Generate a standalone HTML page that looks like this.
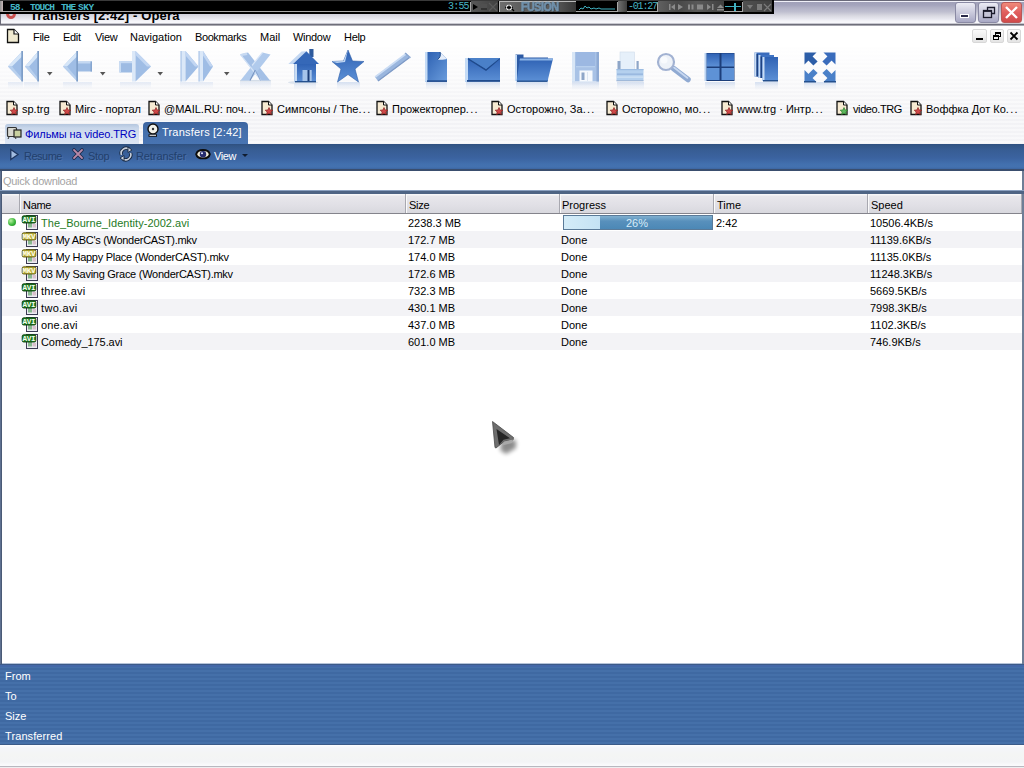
<!DOCTYPE html>
<html><head><meta charset="utf-8">
<style>
*{box-sizing:border-box}
html,body{margin:0;padding:0}
body{width:1024px;height:768px;overflow:hidden;position:relative;background:#fff;font-family:"Liberation Sans",sans-serif;font-size:11px;color:#000}
.a{position:absolute}
.t{position:absolute;white-space:nowrap;line-height:13px}
#title{left:0;top:0;width:1024px;height:26px;background:linear-gradient(#6a6a7a 0,#6a6a7a 1px,#f0f0f8 1px,#f0f0f8 2px,#a0a0b8 2px,#a4a4bc 5px,#b2b2c6 8px,#c0c0d0 12px,#dadae2 16px,#e8e8f0 19px,#f4f4f8 21px,#f8f8fc 23px,#c8c8d0 23px,#c8c8d0 24px,#6e6e7a 24px,#6e6e7a 25px,#a8a8b0 25px,#a8a8b0 26px)}
#winamp{left:0;top:0;width:774px;height:14px;background:#000}
#menubar{left:0;top:26px;width:1024px;height:21px;background:#fff}
#toolbar{left:0;top:47px;width:1024px;height:97px;background:repeating-linear-gradient(rgba(255,255,255,0) 0,rgba(255,255,255,0) 2px,rgba(255,255,255,0.45) 2px,rgba(255,255,255,0.45) 4px),linear-gradient(#fefefe 0,#fcfcfd 12px,#f6f6f8 45px,#f2f2f5 75px,#f4f4f7 97px)}
#tabbar{display:none}
#btoolbar{left:0;top:144px;width:1024px;height:27px;background:linear-gradient(#2e5080 0,#335788 2px,#375d94 6px,#3b63a0 14px,#4270ae 20px,#4472b0 23px,#3c66a2 25px,#3a4e6e 25px,#3a4e6e 27px)}
#qd{left:2px;top:171px;width:1020px;height:20px;background:#fff}
#band{left:0;top:190px;width:1024px;height:4px;background:linear-gradient(#8aa0c0 0,#8aa0c0 1px,#4e6484 1px,#4e6484 4px)}
#header{left:2px;top:194px;width:1020px;height:20px;background:linear-gradient(#f6f6f8 0,#f6f6f8 1px,#e8e7ec 2px,#e0dfe5 12px,#d8d8de 19px,#84848c 19px,#84848c 20px)}
#list{left:2px;top:214px;width:1020px;height:450px;background:#fff}
#details{left:0;top:664px;width:1024px;height:81px;background:linear-gradient(#3c5a88 0,#3c5a88 1px,#4468a8 1px,#4468a8 3px,rgba(40,60,100,0) 3px,rgba(40,60,100,0) 80px,#3a5a88 80px),repeating-linear-gradient(#3f69a2 0,#3f69a2 2px,#4570a9 2px,#4570a9 4px)}
#status{left:0;top:745px;width:1024px;height:23px;background:linear-gradient(#fbfcff 0,#f4f5f9 3px,#f4f5f4 10px,#f3f4f6 17px,#fafafc 20px,#fafafc 21px,#b8b8c0 21px,#b8b8c0 22px,#eeeef0 22px)}
.row{position:absolute;left:2px;width:1020px;height:17px}
.row.alt{background:#f2f2f4}
</style></head><body>
<div id="title" class="a"></div>

<div id="menubar" class="a"></div>
<!-- title -->
<div class="t" style="left:30px;top:8px;font-weight:bold;font-size:13px;line-height:15px;color:#000;letter-spacing:0.15px">Transfers [2:42] - Opera</div>
<div class="a" style="left:6px;top:8px;width:10px;height:11px;border-radius:50%;border:3px solid #c85050;border-top-width:2px;background:transparent"></div><div class="a" style="left:0;top:13px;width:1px;height:12px;background:#6a6a78"></div>
<div id="winamp" class="a">
 <div class="a" style="left:0;top:0;width:774px;height:1px;background:#3a3a3a"></div>
 <div class="a" style="left:0;top:1px;width:3px;height:12px;background:linear-gradient(90deg,#909090,#c8b8b8)"></div>
 <div class="a" style="left:3px;top:2px;width:468px;height:10px;background:#000;border-right:1px solid #a8a8a8;border-bottom:1px solid #a8a8a8"></div>
 <div class="t" style="left:10px;top:2px;font-family:'Liberation Mono';font-size:9.5px;line-height:12px;color:#44b8c8;font-weight:bold;letter-spacing:-1px">58.</div>
 <div class="t" style="left:30px;top:2px;font-family:'Liberation Mono';font-size:9.5px;line-height:12px;color:#44b8c8;font-weight:bold;letter-spacing:-0.9px">TOUCH</div>
 <div class="t" style="left:61px;top:2px;font-family:'Liberation Mono';font-size:9.5px;line-height:12px;color:#44b8c8;font-weight:bold;letter-spacing:-1px">THE</div>
 <div class="t" style="left:78px;top:2px;font-family:'Liberation Mono';font-size:9.5px;line-height:12px;color:#44b8c8;font-weight:bold;letter-spacing:-0.5px">SKY</div>
 <div class="t" style="left:448px;top:0px;font-family:'Liberation Mono';font-size:10px;line-height:13px;color:#48b4c4;letter-spacing:-0.8px">3:55</div>
 <div class="a" style="left:471px;top:1px;width:27px;height:11px;background:linear-gradient(90deg,#585858,#404040)"></div>
 <div class="a" style="left:473px;top:4px;width:0;height:0;border-left:5px solid #000;border-top:3px solid transparent;border-bottom:3px solid transparent"></div>
 <div class="a" style="left:481px;top:4px;width:6px;height:6px;background:#505050;border-bottom:2px solid #333"></div>
 <svg class="a" style="left:488px;top:2px" width="10" height="10"><path d="M1 1 L9 9 M9 1 L1 9" stroke="#5a5a5a" stroke-width="1.3"/></svg>
 <div class="a" style="left:499px;top:1px;width:77px;height:12px;background:linear-gradient(90deg,#6e6e6e,#5c5c5c 30%,#626262 55%,#505050 80%,#363636);border-top:1px solid #b8b8b8;border-left:1px solid #b8b8b8"></div>
 <svg class="a" style="left:504px;top:3px" width="12" height="9"><path d="M1 4.5 H9 M5 1 V8" stroke="#000" stroke-width="1.3"/><circle cx="5" cy="4.5" r="2.6" fill="none" stroke="#fff" stroke-width="1"/><path d="M8 6 L10 8" stroke="#000" stroke-width="1.2"/></svg>
 <div class="t" style="left:521px;top:0px;font-size:12px;line-height:14px;color:#7090aa;font-weight:bold;letter-spacing:-0.6px;transform:scaleX(0.9);transform-origin:0 0;-webkit-text-stroke:0.6px #7090aa;text-shadow:1px 1px 0 #3a4048">FUSION</div>
 <div class="a" style="left:576px;top:2px;width:42px;height:10px;background:#000;border-right:1px solid #a8a8a8;border-bottom:1px solid #a8a8a8"></div>
 <svg class="a" style="left:577px;top:3px" width="40" height="9"><path d="M2 7 L4 5 L6 6 L8 3 L10 5 L12 4 L14 6 L17 5 L19 6 L22 5 L24 6 L27 6 L30 6 L38 6" fill="none" stroke="#40b0c0" stroke-width="1"/></svg>
 <div class="a" style="left:618px;top:1px;width:9px;height:12px;background:linear-gradient(90deg,#707070,#404040)"></div>
 <div class="a" style="left:627px;top:2px;width:31px;height:10px;background:#000;border-right:1px solid #a8a8a8;border-bottom:1px solid #a8a8a8"></div>
 <div class="t" style="left:628px;top:0px;font-family:'Liberation Mono';font-size:10px;line-height:13px;color:#48b4c4;letter-spacing:-1.2px">-01:27</div>
 <div class="a" style="left:658px;top:1px;width:66px;height:12px;background:linear-gradient(90deg,#606060,#484848 30%,#585858 60%,#404040)"></div>
 
 <div class="a" style="left:724px;top:2px;width:19px;height:10px;background:#000;border-right:1px solid #a8a8a8;border-bottom:1px solid #a8a8a8"></div>
 <div class="a" style="left:725px;top:6px;width:16px;height:1px;background:#40b0c0"></div>
 <div class="a" style="left:734px;top:3px;width:2px;height:8px;background:#40b0c0"></div>
 <div class="a" style="left:743px;top:1px;width:31px;height:12px;background:linear-gradient(90deg,#505050,#404040)"></div>
 <svg class="a" style="left:658px;top:1px" width="116" height="12">
<g fill="#8a8a8a">
<rect x="11" y="3" width="1.5" height="6"/><path d="M17 3 L13 6 L17 9 Z"/>
<path d="M20 3 L25 6 L20 9 Z"/>
<rect x="30" y="3.5" width="2" height="5"/><rect x="33.5" y="3.5" width="2" height="5"/>
<rect x="39" y="3.5" width="6" height="5"/>
<path d="M49 3 L53 6 L49 9 Z"/><rect x="54" y="3" width="1.5" height="6"/>
<path d="M59 7 L62.5 3.5 L66 7 Z"/><rect x="59" y="8" width="7" height="1.5"/>
</g>
<g fill="#7a7a7a"><path d="M89 4 H95 L92 8 Z"/><rect x="99" y="3" width="5" height="6"/><path d="M106 3 L113 10 M113 3 L106 10" stroke="#7a7a7a" stroke-width="1.2"/></g>
</svg>
 <div class="a" style="left:0;top:12px;width:774px;height:2px;background:#000"></div>
 <div class="a" style="left:772px;top:0;width:2px;height:14px;background:#000"></div>
</div>
<!-- title buttons -->
<div class="a" style="left:955px;top:2px;width:21px;height:21px;border:1px solid #8a8aa4;border-radius:3px;background:linear-gradient(#ececf4,#c4c4d8 60%,#a8a8c4)"></div>
<div class="a" style="left:960px;top:14px;width:9px;height:4px;background:#2a2a4a;border:1px solid #fff"></div>
<div class="a" style="left:978px;top:2px;width:21px;height:21px;border:1px solid #8a8aa4;border-radius:3px;background:linear-gradient(#ececf4,#c4c4d8 60%,#a8a8c4)"></div>
<svg class="a" style="left:982px;top:6px" width="14" height="13"><path d="M5.5 4 V1.5 H12.5 V7.5 H10" fill="none" stroke="#1a1a2a" stroke-width="1.3"/><rect x="1.5" y="4.5" width="8" height="7" fill="#c4c4d6" stroke="#1a1a2a" stroke-width="1.3"/><path d="M1.5 5.3 H9.5" stroke="#1a1a2a" stroke-width="1.2"/></svg>

<div class="a" style="left:1001px;top:2px;width:21px;height:21px;border:1px solid #b85858;border-radius:3px;background:linear-gradient(#f08a7a,#e05e5e 50%,#d04a4a)"></div>
<svg class="a" style="left:1001px;top:2px" width="21" height="21"><path d="M5 5 L16 16 M16 5 L5 16" stroke="#fff" stroke-width="2.4"/></svg>
<!-- menu -->
<svg class="a" style="left:6px;top:28px" width="14" height="16"><path d="M1.5 1.5 H8 L12.5 6 V14.5 H1.5 Z" fill="#f0ead0" stroke="#111" stroke-width="1.3"/><path d="M8 1.5 V6 H12.5" fill="#fff" stroke="#111" stroke-width="1.2"/></svg>
<div class="t" style="left:33px;top:31px;letter-spacing:-0.3px">File</div>
<div class="t" style="left:63px;top:31px;letter-spacing:-0.3px">Edit</div>
<div class="t" style="left:95px;top:31px;letter-spacing:-0.3px">View</div>
<div class="t" style="left:130px;top:31px">Navigation</div>
<div class="t" style="left:195px;top:31px;letter-spacing:-0.4px">Bookmarks</div>
<div class="t" style="left:260px;top:31px">Mail</div>
<div class="t" style="left:293px;top:31px;letter-spacing:-0.3px">Window</div>
<div class="t" style="left:344px;top:31px;letter-spacing:-0.3px">Help</div>
<div class="a" style="left:972px;top:29px;width:15px;height:14px;border:1px solid #d8d8d8;border-radius:2px;background:linear-gradient(#fafafa,#e4e4e4)"></div>
<div class="a" style="left:976px;top:38px;width:7px;height:2px;background:#000"></div>
<div class="a" style="left:990px;top:29px;width:14px;height:14px;border:1px solid #d8d8d8;border-radius:2px;background:linear-gradient(#fafafa,#e4e4e4)"></div>
<div class="a" style="left:995px;top:32px;width:6px;height:5px;border:1.5px solid #000;border-top-width:2px"></div>
<div class="a" style="left:993px;top:35px;width:6px;height:5px;border:1.5px solid #000;border-top-width:2px;background:#f0f0f0"></div>
<div class="a" style="left:1007px;top:29px;width:14px;height:14px;border:1px solid #d8d8d8;border-radius:2px;background:linear-gradient(#fafafa,#e4e4e4)"></div>
<svg class="a" style="left:1007px;top:29px" width="14" height="14"><path d="M3.5 3.5 L10.5 10.5 M10.5 3.5 L3.5 10.5" stroke="#000" stroke-width="1.8"/></svg>

<div id="toolbar" class="a"></div>
<div id="tabbar" class="a"></div>
<svg class="a" style="left:0;top:0" width="1024" height="100">
<defs>
<linearGradient id="lb" x1="0" y1="0" x2="0" y2="1"><stop offset="0" stop-color="#b8d0ee"/><stop offset="1" stop-color="#8eb0dc"/></linearGradient>
<linearGradient id="lbh" x1="0" y1="0" x2="1" y2="0"><stop offset="0" stop-color="#e2ecf9"/><stop offset="1" stop-color="#9dbbe2"/></linearGradient>
<linearGradient id="db" x1="0" y1="0" x2="0" y2="1"><stop offset="0" stop-color="#2f62b4"/><stop offset="1" stop-color="#5c90d6"/></linearGradient>
<linearGradient id="db2" x1="0" y1="0" x2="1" y2="1"><stop offset="0" stop-color="#2a5eb0"/><stop offset="1" stop-color="#6a9cdc"/></linearGradient>
<linearGradient id="gray" x1="0" y1="0" x2="0" y2="1"><stop offset="0" stop-color="#a9c2e4"/><stop offset="1" stop-color="#92b0da"/></linearGradient>
<linearGradient id="refl" x1="0" y1="0" x2="0" y2="1"><stop offset="0" stop-color="#a8c0e4" stop-opacity="0.45"/><stop offset="1" stop-color="#c8d8f0" stop-opacity="0"/></linearGradient></defs>
<rect x="294" y="82" width="22" height="8" fill="url(#refl)"/><rect x="337" y="82" width="23" height="8" fill="url(#refl)"/><rect x="426" y="82" width="21" height="8" fill="url(#refl)"/><rect x="466" y="82" width="34" height="8" fill="url(#refl)"/><rect x="516" y="82" width="32" height="8" fill="url(#refl)"/><rect x="572" y="82" width="27" height="8" fill="url(#refl)"/><rect x="617" y="82" width="27" height="8" fill="url(#refl)"/><rect x="705" y="82" width="30" height="8" fill="url(#refl)"/><rect x="755" y="82" width="23" height="8" fill="url(#refl)"/><rect x="804" y="82" width="32" height="8" fill="url(#refl)"/><rect x="8" y="82" width="15" height="7" fill="url(#refl)" opacity="0.6"/><rect x="24" y="82" width="15" height="7" fill="url(#refl)" opacity="0.6"/><rect x="63" y="82" width="29" height="7" fill="url(#refl)" opacity="0.6"/><rect x="120" y="82" width="31" height="7" fill="url(#refl)" opacity="0.6"/><rect x="180" y="82" width="33" height="7" fill="url(#refl)" opacity="0.6"/><rect x="240" y="82" width="31" height="7" fill="url(#refl)" opacity="0.6"/>
<!-- rewind -->
<path d="M8 66.5 L22.5 51 L22.5 81.5 Z" fill="#9fbde5"/><path d="M8 66.5 L22.5 51 L22.5 56 L12 66.5 Z" fill="#d6e6f8"/><path d="M8 66.5 L12 66.5 L22.5 79 L22.5 81.5 Z" fill="#b8d0ee"/><rect x="21.3" y="51" width="1.7" height="30.5" fill="#7e9ec8"/>
<path d="M25 66.5 L38.5 51 L38.5 81.5 Z" fill="#9fbde5"/><path d="M25 66.5 L38.5 51 L38.5 56 L29 66.5 Z" fill="#d6e6f8"/><path d="M25 66.5 L29 66.5 L38.5 79 L38.5 81.5 Z" fill="#b8d0ee"/><rect x="37.3" y="51" width="1.7" height="30.5" fill="#7e9ec8"/>
<path d="M47 72 H52.5 L49.7 75.5 Z" fill="#555"/>
<!-- back -->
<path d="M63 66.5 L77.5 51 L77.5 81.5 Z" fill="#9fbde5"/><path d="M63 66.5 L77.5 51 L77.5 56 L67 66.5 Z" fill="#d6e6f8"/><path d="M63 66.5 L67 66.5 L77.5 79 L77.5 81.5 Z" fill="#b8d0ee"/>
<rect x="77" y="61.5" width="15" height="10" fill="#9dbbe3"/><rect x="77" y="61.5" width="15" height="2" fill="#c4d8f2"/><rect x="90.5" y="61.5" width="1.5" height="10" fill="#86a6d0"/>
<rect x="76.3" y="51" width="1.7" height="30.5" fill="#7e9ec8"/>
<path d="M100 72 H105.5 L102.7 75.5 Z" fill="#555"/>
<!-- forward -->
<rect x="119.5" y="61" width="14" height="11.5" fill="#9dbbe3"/><rect x="119.5" y="61" width="14" height="2.2" fill="#c4d8f2"/><rect x="119.5" y="61" width="1.5" height="11.5" fill="#c8dcf4"/>
<rect x="132" y="51" width="3.5" height="30.5" fill="#dbe8f8"/>
<path d="M135.5 51 L151 66.5 L135.5 81.5 Z" fill="#9fbde5"/><path d="M135.5 51 L151 66.5 L147 66.5 L135.5 55 Z" fill="#c2d6f2"/>
<path d="M157.5 72 H163 L160.2 75.5 Z" fill="#555"/>
<!-- ff -->
<rect x="180.5" y="51" width="5" height="30.5" fill="#dbe8f8"/><rect x="180.5" y="51" width="1.2" height="30.5" fill="#b0c8e8"/>
<path d="M185.5 51 L198.5 66.5 L185.5 81.5 Z" fill="#9fbde5"/><path d="M185.5 51 L198.5 66.5 L195 66.5 L185.5 55.5 Z" fill="#c2d6f2"/>
<rect x="198.5" y="51" width="4.5" height="30.5" fill="#dbe8f8"/><rect x="198.5" y="51" width="1.2" height="30.5" fill="#b0c8e8"/>
<path d="M203 51 L213 66.5 L203 81.5 Z" fill="#9fbde5"/><path d="M203 51 L213 66.5 L210 66.5 L203 55.5 Z" fill="#c2d6f2"/>
<path d="M224 72 H229.5 L226.7 75.5 Z" fill="#555"/>
<!-- stop -->
<rect x="240" y="80" width="31" height="1.6" fill="#d4dde8"/>
<path d="M240 54.5 L248 52.5 L270 80.5 L260.5 80.5 Z" fill="#a4c0e6"/>
<path d="M262.5 52.5 L270.5 54.5 L250 80.5 L240.5 80.5 Z" fill="#b0caec"/>
<path d="M240.5 54.5 L261 80.5" stroke="#d6e4f7" stroke-width="1.2"/>
<path d="M262.5 52.5 L252 65.5" stroke="#d6e4f7" stroke-width="1.2"/>
<path d="M255.3 70 L250 80.5" stroke="#7894c0" stroke-width="1.1"/>
<path d="M255.3 70 L260.5 80.5" stroke="#8aa6d0" stroke-width="0.9"/>
<path d="M246.5 52.5 L247.5 55 L241.5 56 L240.5 54 Z" fill="#c8daf2"/>
<!-- home -->
<ellipse cx="303" cy="82.5" rx="15" ry="1.6" fill="#dde4ee"/>
<rect x="309.3" y="49" width="4.2" height="8" fill="#2e5a9c"/>
<rect x="294.5" y="64" width="21.5" height="18" fill="url(#db)"/><rect x="294.5" y="64" width="2.5" height="18" fill="#c8dcf4"/>
<path d="M288.3 64 L301.5 51.5 L306.4 51.3 L293 64 Z" fill="#c4d8f2"/>
<path d="M293 64 L306.4 51.3 L319 64 Z" fill="#3568b8"/>
<rect x="302.5" y="70" width="9.2" height="12" fill="#a6c4ea"/><rect x="307.5" y="70" width="2" height="12" fill="#1c3e78"/>
<rect x="295" y="81" width="21" height="1.4" fill="#24508e"/>
<!-- star -->
<path d="M348 50 L352.5 61 L364 61.5 L355 69 L358.5 82 L348 74.5 L337.5 82 L341 69 L332 61.5 L343.5 61 Z" fill="url(#db)" stroke="#2d5ea8" stroke-width="0.6"/>
<path d="M348 50 L343.5 61 L332 61.5 L337 63 L345 62 Z" fill="#bcd4f2"/>
<!-- pen -->
<path d="M376.5 79 L408 55.5" stroke="#9ab6de" stroke-width="5.6" stroke-linecap="butt"/>
<path d="M375.2 77 L406.5 53.5" stroke="#cadcf4" stroke-width="1.6" stroke-linecap="butt"/>
<path d="M378 81 L409.5 57.5" stroke="#7e9ac6" stroke-width="1.2" stroke-linecap="butt"/>
<path d="M405 53 L410.5 57.8" stroke="#8aa6d0" stroke-width="1.4"/>
<!-- page -->
<path d="M425 52 H440 L447 59 V81.5 H425 Z" fill="url(#db2)"/><rect x="425" y="52" width="2.5" height="29.5" fill="#c4dbf6"/>
<path d="M440 52 C441 55 440 58 437.5 59.5 C441 60 445 59.5 447 59 Z" fill="#e6eefa"/><path d="M437.5 59.5 C440 58 441 55 440 52" fill="none" stroke="#1e4a8a" stroke-width="1"/>
<rect x="427" y="80.3" width="20" height="1.6" fill="#1f4a8c"/>
<!-- envelope -->
<rect x="465" y="58" width="35" height="23.5" fill="url(#db)"/><rect x="465" y="58" width="3" height="23.5" fill="#c4dbf6"/>
<path d="M468 58.5 L486 70 L499.5 58.5" fill="none" stroke="#1f4a8c" stroke-width="1.6"/><path d="M468 58 L486 69 L500 58 Z" fill="#4a80c8"/>
<rect x="467" y="80" width="33" height="1.8" fill="#1f4a8c"/>
<!-- folder -->
<path d="M515.5 54.5 H523.5 V57.5 H548 V81 H515.5 Z" fill="#2c5aa4"/><rect x="515" y="55" width="2" height="26" fill="#c4dbf6"/>
<path d="M520 58.5 H553 L547.5 81.5 H516.5 Z" fill="url(#db)"/><path d="M520 58.5 H553 L552.5 60.5 H519.5 Z" fill="#8cb4e6"/>
<rect x="517" y="80.5" width="30.5" height="1.4" fill="#24508e"/>
<!-- floppy -->
<rect x="572" y="52" width="27" height="29.5" fill="#a8c2e6"/><rect x="572" y="52" width="3" height="29.5" fill="#d8e6f6"/><rect x="596.5" y="52" width="2.5" height="29.5" fill="#8eaad4"/>
<rect x="576" y="52" width="19" height="15" fill="#9cb8e2"/><rect x="576" y="66" width="19" height="1.3" fill="#b8d0ee"/>
<rect x="579.5" y="70.5" width="13" height="11" fill="#f6f9fd"/><rect x="581.5" y="72.5" width="3" height="7.5" fill="#8ea6c8"/><rect x="587" y="72" width="1" height="9" fill="#dde6f2"/>
<!-- printer -->
<rect x="620" y="52" width="14.5" height="18" fill="#e6f0fa" stroke="#d0dcec" stroke-width="0.6"/>
<rect x="617.5" y="61" width="3" height="8.5" fill="#8ea6c8"/><rect x="636.5" y="61" width="2.2" height="8.5" fill="#8ea6c8"/>
<rect x="616.5" y="69" width="27" height="12" fill="#b4d0ee"/><rect x="616.5" y="69" width="27" height="1.2" fill="#9cbce2"/>
<rect x="617" y="73.5" width="26" height="1.3" fill="#94b4dc"/><rect x="617" y="76.5" width="26" height="1.2" fill="#d2e4f6"/>
<rect x="616.5" y="80.3" width="27" height="1" fill="#98b0d0"/>
<!-- magnifier -->
<path d="M673.5 68.5 L688 79.5" stroke="#90aad2" stroke-width="5.5" stroke-linecap="round"/>
<path d="M674 67.5 L687.5 78" stroke="#c8d8f0" stroke-width="1.6" stroke-linecap="round"/>
<circle cx="666" cy="62" r="8" fill="#eef2f8" stroke="#a2b2d2" stroke-width="2.2"/>
<circle cx="664" cy="60" r="3.5" fill="#f8fafd"/>
<!-- tile -->
<rect x="705" y="53" width="29.5" height="28" fill="#1c3e7a"/>
<rect x="706.5" y="53.5" width="13" height="13" fill="url(#db)"/><rect x="721.5" y="53.5" width="12.5" height="13" fill="url(#db)"/>
<rect x="706.5" y="68" width="13" height="12" fill="#5e92d6"/><rect x="721.5" y="68" width="12.5" height="12" fill="#5e92d6"/>
<rect x="704.5" y="53" width="2" height="28" fill="#b8d2f2"/>
<!-- cascade -->
<rect x="754.5" y="52.5" width="15" height="24" fill="#3a6cbc"/><rect x="754.5" y="52.5" width="2" height="24" fill="#c8dcf4"/><rect x="756.5" y="54" width="1.5" height="22.5" fill="#1e4282"/>
<rect x="758.5" y="55" width="15.5" height="23" fill="#4074c4"/><rect x="758.5" y="55" width="2" height="23" fill="#c8dcf4"/><rect x="760.5" y="56.5" width="1.5" height="21.5" fill="#1e4282"/>
<rect x="762.5" y="57" width="15.5" height="24" fill="url(#db)"/><rect x="762.5" y="57" width="2" height="24" fill="#c8dcf4"/><rect x="763" y="80" width="15" height="1.5" fill="#24508e"/>
<!-- fullscreen -->
<g stroke-linecap="butt">
<path d="M804.5 52.5 H816.5 L804.5 64.5 Z" fill="#2d5ea8"/><path d="M809 57 L815.5 63.5" stroke="#2d5ea8" stroke-width="6"/>
<path d="M835.5 52.5 H823.5 L835.5 64.5 Z" fill="#3a6cbc"/><path d="M831 57 L824.5 63.5" stroke="#3a6cbc" stroke-width="6"/>
<path d="M804.5 82 H816.5 L804.5 70 Z" fill="#4a80c8"/><path d="M809 77.5 L815.5 71" stroke="#4a80c8" stroke-width="6"/>
<path d="M835.5 82 H823.5 L835.5 70 Z" fill="#4a80c8"/><path d="M831 77.5 L824.5 71" stroke="#4a80c8" stroke-width="6"/>
<rect x="804" y="81" width="12" height="1.5" fill="#24508e"/><rect x="824" y="81" width="12" height="1.5" fill="#24508e"/>
</g>
</svg>

<div id="btoolbar" class="a"></div><svg class="a" style="left:6px;top:100px" width="14" height="16"><path d="M1 1.5 H7.5 L11 5 V14.5 H1 Z" fill="#f6ead2" stroke="#111" stroke-width="1.3"/><path d="M7.5 1.5 V5 H11" fill="#fff" stroke="#111" stroke-width="1"/><path d="M8 7.5 L9.1 10 L11.8 10.2 L9.8 12 L10.4 14.6 L8 13.2 L5.6 14.6 L6.2 12 L4.2 10.2 L6.9 10 Z" fill="#d04848" stroke="#8a2020" stroke-width="0.7"/></svg>
<div class="t" style="left:22px;top:103px">sp.trg</div>
<svg class="a" style="left:59px;top:100px" width="14" height="16"><path d="M1 1.5 H7.5 L11 5 V14.5 H1 Z" fill="#f6ead2" stroke="#111" stroke-width="1.3"/><path d="M7.5 1.5 V5 H11" fill="#fff" stroke="#111" stroke-width="1"/><path d="M8 7.5 L9.1 10 L11.8 10.2 L9.8 12 L10.4 14.6 L8 13.2 L5.6 14.6 L6.2 12 L4.2 10.2 L6.9 10 Z" fill="#d04848" stroke="#8a2020" stroke-width="0.7"/></svg>
<div class="t" style="left:75px;top:103px">Mirc - портал</div>
<svg class="a" style="left:148px;top:100px" width="14" height="16"><path d="M1 1.5 H7.5 L11 5 V14.5 H1 Z" fill="#f6ead2" stroke="#111" stroke-width="1.3"/><path d="M7.5 1.5 V5 H11" fill="#fff" stroke="#111" stroke-width="1"/><path d="M8 7.5 L9.1 10 L11.8 10.2 L9.8 12 L10.4 14.6 L8 13.2 L5.6 14.6 L6.2 12 L4.2 10.2 L6.9 10 Z" fill="#d04848" stroke="#8a2020" stroke-width="0.7"/></svg>
<div class="t" style="left:164px;top:103px">@MAIL.RU: поч<span style="letter-spacing:1.3px">...</span></div>
<svg class="a" style="left:261px;top:100px" width="14" height="16"><path d="M1 1.5 H7.5 L11 5 V14.5 H1 Z" fill="#f6ead2" stroke="#111" stroke-width="1.3"/><path d="M7.5 1.5 V5 H11" fill="#fff" stroke="#111" stroke-width="1"/><path d="M8 7.5 L9.1 10 L11.8 10.2 L9.8 12 L10.4 14.6 L8 13.2 L5.6 14.6 L6.2 12 L4.2 10.2 L6.9 10 Z" fill="#d04848" stroke="#8a2020" stroke-width="0.7"/></svg>
<div class="t" style="left:277px;top:103px">Симпсоны / The<span style="letter-spacing:1.3px">...</span></div>
<svg class="a" style="left:376px;top:100px" width="14" height="16"><path d="M1 1.5 H7.5 L11 5 V14.5 H1 Z" fill="#f6ead2" stroke="#111" stroke-width="1.3"/><path d="M7.5 1.5 V5 H11" fill="#fff" stroke="#111" stroke-width="1"/><path d="M8 7.5 L9.1 10 L11.8 10.2 L9.8 12 L10.4 14.6 L8 13.2 L5.6 14.6 L6.2 12 L4.2 10.2 L6.9 10 Z" fill="#d04848" stroke="#8a2020" stroke-width="0.7"/></svg>
<div class="t" style="left:392px;top:103px">Прожекторпер<span style="letter-spacing:1.3px">...</span></div>
<svg class="a" style="left:491px;top:100px" width="14" height="16"><path d="M1 1.5 H7.5 L11 5 V14.5 H1 Z" fill="#f6ead2" stroke="#111" stroke-width="1.3"/><path d="M7.5 1.5 V5 H11" fill="#fff" stroke="#111" stroke-width="1"/><path d="M8 7.5 L9.1 10 L11.8 10.2 L9.8 12 L10.4 14.6 L8 13.2 L5.6 14.6 L6.2 12 L4.2 10.2 L6.9 10 Z" fill="#d04848" stroke="#8a2020" stroke-width="0.7"/></svg>
<div class="t" style="left:507px;top:103px">Осторожно, За<span style="letter-spacing:1.3px">...</span></div>
<svg class="a" style="left:606px;top:100px" width="14" height="16"><path d="M1 1.5 H7.5 L11 5 V14.5 H1 Z" fill="#f6ead2" stroke="#111" stroke-width="1.3"/><path d="M7.5 1.5 V5 H11" fill="#fff" stroke="#111" stroke-width="1"/><path d="M8 7.5 L9.1 10 L11.8 10.2 L9.8 12 L10.4 14.6 L8 13.2 L5.6 14.6 L6.2 12 L4.2 10.2 L6.9 10 Z" fill="#d04848" stroke="#8a2020" stroke-width="0.7"/></svg>
<div class="t" style="left:622px;top:103px">Осторожно, мо<span style="letter-spacing:1.3px">...</span></div>
<svg class="a" style="left:721px;top:100px" width="14" height="16"><path d="M1 1.5 H7.5 L11 5 V14.5 H1 Z" fill="#f6ead2" stroke="#111" stroke-width="1.3"/><path d="M7.5 1.5 V5 H11" fill="#fff" stroke="#111" stroke-width="1"/><path d="M8 7.5 L9.1 10 L11.8 10.2 L9.8 12 L10.4 14.6 L8 13.2 L5.6 14.6 L6.2 12 L4.2 10.2 L6.9 10 Z" fill="#d04848" stroke="#8a2020" stroke-width="0.7"/></svg>
<div class="t" style="left:737px;top:103px">www.trg · Интр<span style="letter-spacing:1.3px">...</span></div>
<svg class="a" style="left:836px;top:100px" width="14" height="16"><path d="M1 1.5 H7.5 L11 5 V14.5 H1 Z" fill="#f6ead2" stroke="#111" stroke-width="1.3"/><path d="M7.5 1.5 V5 H11" fill="#fff" stroke="#111" stroke-width="1"/><path d="M8 7.5 L9.1 10 L11.8 10.2 L9.8 12 L10.4 14.6 L8 13.2 L5.6 14.6 L6.2 12 L4.2 10.2 L6.9 10 Z" fill="#5cb85c" stroke="#2a7a2a" stroke-width="0.7"/></svg>
<div class="t" style="left:853px;top:103px;letter-spacing:-0.4px">video.TRG</div>
<svg class="a" style="left:910px;top:100px" width="14" height="16"><path d="M1 1.5 H7.5 L11 5 V14.5 H1 Z" fill="#f6ead2" stroke="#111" stroke-width="1.3"/><path d="M7.5 1.5 V5 H11" fill="#fff" stroke="#111" stroke-width="1"/><path d="M8 7.5 L9.1 10 L11.8 10.2 L9.8 12 L10.4 14.6 L8 13.2 L5.6 14.6 L6.2 12 L4.2 10.2 L6.9 10 Z" fill="#d04848" stroke="#8a2020" stroke-width="0.7"/></svg>
<div class="t" style="left:926px;top:103px">Воффка Дот Ко<span style="letter-spacing:1.3px">...</span></div>

<div class="a" style="left:5px;top:124px;width:134px;height:20px;border-radius:3px 3px 0 0;background:linear-gradient(#b4c6de,#c8d6ea 4px,#d4dff0 12px,#dce6f4)"></div>
<svg class="a" style="left:6px;top:125px" width="17" height="15"><rect x="1.5" y="2.5" width="9" height="9" rx="1" fill="#d8d8d0" stroke="#333" stroke-width="1.2"/><rect x="8" y="5" width="7" height="7" fill="#c8d0a0" stroke="#222" stroke-width="1.2"/><path d="M3 12 L2 14 M9 12 L10 14" stroke="#333"/></svg>
<div class="t" style="left:25px;top:128px;color:#0000c0;letter-spacing:-0.1px">Фильмы на video.TRG</div>
<div class="a" style="left:143px;top:122px;width:105px;height:22px;border-radius:4px 4px 0 0;background:linear-gradient(#3d65a0,#4570ac 10px,#4874b2)"></div>
<svg class="a" style="left:146px;top:123px" width="14" height="15"><circle cx="7" cy="6" r="5" fill="#f2f2ea" stroke="#111" stroke-width="1.4"/><circle cx="7" cy="6" r="1.2" fill="#333"/><path d="M2.5 12.5 H11" stroke="#111" stroke-width="2.5"/><path d="M3.5 12.3 H10" stroke="#f4f4f4" stroke-width="1"/></svg>
<div class="t" style="left:162px;top:126px;color:#fff;letter-spacing:0.2px">Transfers [2:42]</div>

<div class="a" style="left:0;top:171px;width:2px;height:493px;background:linear-gradient(90deg,#5e7090 0,#5e7090 1px,#4a5a76 1px)"></div>
<div class="a" style="left:1022px;top:171px;width:2px;height:493px;background:#6e7e96"></div>
<div id="qd" class="a"></div>
<div id="band" class="a"></div>
<svg class="a" style="left:9px;top:148px" width="12" height="14"><path d="M1.8 1.5 L9 6.5 L1.8 11.5 Z" fill="#a2bce0" stroke="#1e3660" stroke-width="1.3"/></svg>
<div class="t" style="left:24px;top:150px;color:#22406c;letter-spacing:-0.5px;text-shadow:1px 1px 0 rgba(110,140,190,0.3)">Resume</div>
<svg class="a" style="left:71px;top:147px" width="14" height="14"><path d="M3 3 L11 11 M11 3 L3 11" stroke="#1a2a4a" stroke-width="3.6" stroke-linecap="round"/><path d="M3 3 L11 11 M11 3 L3 11" stroke="#b888a8" stroke-width="1.8" stroke-linecap="round"/></svg>
<div class="t" style="left:88px;top:150px;color:#22406c;letter-spacing:-0.3px;text-shadow:1px 1px 0 rgba(110,140,190,0.3)">Stop</div>
<svg class="a" style="left:118px;top:146px" width="16" height="16"><g fill="none" stroke-linecap="butt"><path d="M3.5 9 A5 5 0 0 1 11.5 3.5" stroke="#1a2a44" stroke-width="3.4"/><path d="M12.5 7 A5 5 0 0 1 4.5 12.5" stroke="#1a2a44" stroke-width="3.4"/><path d="M3.5 9 A5 5 0 0 1 11.5 3.5" stroke="#c8d0dc" stroke-width="1.6"/><path d="M12.5 7 A5 5 0 0 1 4.5 12.5" stroke="#c8d0dc" stroke-width="1.6"/></g><path d="M10 1 L14 4 L10 6.5 Z" fill="#c8d0dc" stroke="#1a2a44" stroke-width="0.9"/><path d="M6 9.5 L2 12 L6 15 Z" fill="#c8d0dc" stroke="#1a2a44" stroke-width="0.9"/></svg>
<div class="t" style="left:136px;top:150px;color:#22406c;letter-spacing:-0.1px;text-shadow:1px 1px 0 rgba(110,140,190,0.3)">Retransfer</div>
<svg class="a" style="left:195px;top:148px" width="16" height="13"><path d="M1.2 6.2 C2.5 0.6 13.5 0.6 14.8 6.2 C13.5 11.8 2.5 11.8 1.2 6.2 Z" fill="#f2ecd8" stroke="#0c0c0c" stroke-width="1.9"/><circle cx="8" cy="6.2" r="3.2" fill="#262c6e"/><circle cx="7" cy="5.2" r="1" fill="#e8ecff"/></svg>
<div class="t" style="left:214px;top:150px;color:#fff;letter-spacing:-0.4px">View</div>
<div class="a" style="left:242px;top:154px;width:0;height:0;border-left:3px solid transparent;border-right:3px solid transparent;border-top:3px solid #101c30"></div>
<div class="t" style="left:3px;top:175px;color:#a4a4a4;letter-spacing:-0.3px">Quick download</div>

<div id="header" class="a"></div>
<div class="a" style="left:19px;top:194px;width:1px;height:19px;background:#a8a8b0"></div><div class="a" style="left:20px;top:194px;width:1px;height:19px;background:#fafafa"></div>
<div class="a" style="left:405px;top:194px;width:1px;height:19px;background:#a8a8b0"></div><div class="a" style="left:406px;top:194px;width:1px;height:19px;background:#fafafa"></div>
<div class="a" style="left:559px;top:194px;width:1px;height:19px;background:#a8a8b0"></div><div class="a" style="left:560px;top:194px;width:1px;height:19px;background:#fafafa"></div>
<div class="a" style="left:713px;top:194px;width:1px;height:19px;background:#a8a8b0"></div><div class="a" style="left:714px;top:194px;width:1px;height:19px;background:#fafafa"></div>
<div class="a" style="left:867px;top:194px;width:1px;height:19px;background:#a8a8b0"></div><div class="a" style="left:868px;top:194px;width:1px;height:19px;background:#fafafa"></div>
<div class="a" style="left:1021px;top:194px;width:1px;height:19px;background:#a8a8b0"></div>
<div class="t" style="left:23px;top:199px;letter-spacing:-0.3px">Name</div>
<div class="t" style="left:409px;top:199px;letter-spacing:-0.3px">Size</div>
<div class="t" style="left:562px;top:199px">Progress</div>
<div class="t" style="left:717px;top:199px">Time</div>
<div class="t" style="left:871px;top:199px">Speed</div>

<div id="list" class="a"></div>
<svg class="a" style="left:21px;top:214px" width="18" height="17"><rect x="5.5" y="1.5" width="11" height="14" fill="#ececf2" stroke="#3a3a52" stroke-width="1"/><rect x="7" y="9" width="4" height="4.5" fill="#88b890"/><rect x="11.5" y="10" width="3.5" height="3.5" fill="#d8c0cc"/><rect x="1.2" y="1.8" width="13.6" height="7.2" rx="1.5" fill="#1e7a1e" stroke="#0c400c" stroke-width="0.9"/><text x="8" y="7.9" font-family="Liberation Mono" font-weight="bold" font-size="7.6" fill="#f4fff0" text-anchor="middle" letter-spacing="-0.3">AVI</text></svg>
<div class="t" style="left:41px;top:217px;color:#1e7a1e;letter-spacing:0.03px">The_Bourne_Identity-2002.avi</div>
<div class="t" style="left:408px;top:217px">2238.3 MB</div>
<div class="t" style="left:716px;top:217px">2:42</div>
<div class="t" style="left:870px;top:217px">10506.4KB/s</div>
<div class="a" style="left:2px;top:231px;width:1020px;height:17px;background:#f3f3f6"></div>
<svg class="a" style="left:21px;top:231px" width="18" height="17"><rect x="5.5" y="1.5" width="11" height="14" fill="#ececf2" stroke="#3a3a52" stroke-width="1"/><rect x="7" y="9" width="4" height="4.5" fill="#88b890"/><rect x="11.5" y="10" width="3.5" height="3.5" fill="#d8c0cc"/><rect x="1.2" y="1.8" width="13.6" height="7.2" rx="1.5" fill="#bdb238" stroke="#5e5610" stroke-width="0.9"/><text x="8" y="7.9" font-family="Liberation Mono" font-weight="bold" font-size="7.6" fill="#fffde8" text-anchor="middle" letter-spacing="-0.3">MKV</text></svg>
<div class="t" style="left:41px;top:234px;color:#000;letter-spacing:-0.29px">05 My ABC's (WonderCAST).mkv</div>
<div class="t" style="left:408px;top:234px">172.7 MB</div>
<div class="t" style="left:561px;top:234px">Done</div>
<div class="t" style="left:870px;top:234px">11139.6KB/s</div>
<svg class="a" style="left:21px;top:248px" width="18" height="17"><rect x="5.5" y="1.5" width="11" height="14" fill="#ececf2" stroke="#3a3a52" stroke-width="1"/><rect x="7" y="9" width="4" height="4.5" fill="#88b890"/><rect x="11.5" y="10" width="3.5" height="3.5" fill="#d8c0cc"/><rect x="1.2" y="1.8" width="13.6" height="7.2" rx="1.5" fill="#bdb238" stroke="#5e5610" stroke-width="0.9"/><text x="8" y="7.9" font-family="Liberation Mono" font-weight="bold" font-size="7.6" fill="#fffde8" text-anchor="middle" letter-spacing="-0.3">MKV</text></svg>
<div class="t" style="left:41px;top:251px;color:#000;letter-spacing:-0.26px">04 My Happy Place (WonderCAST).mkv</div>
<div class="t" style="left:408px;top:251px">174.0 MB</div>
<div class="t" style="left:561px;top:251px">Done</div>
<div class="t" style="left:870px;top:251px">11135.0KB/s</div>
<div class="a" style="left:2px;top:265px;width:1020px;height:17px;background:#f3f3f6"></div>
<svg class="a" style="left:21px;top:265px" width="18" height="17"><rect x="5.5" y="1.5" width="11" height="14" fill="#ececf2" stroke="#3a3a52" stroke-width="1"/><rect x="7" y="9" width="4" height="4.5" fill="#88b890"/><rect x="11.5" y="10" width="3.5" height="3.5" fill="#d8c0cc"/><rect x="1.2" y="1.8" width="13.6" height="7.2" rx="1.5" fill="#bdb238" stroke="#5e5610" stroke-width="0.9"/><text x="8" y="7.9" font-family="Liberation Mono" font-weight="bold" font-size="7.6" fill="#fffde8" text-anchor="middle" letter-spacing="-0.3">MKV</text></svg>
<div class="t" style="left:41px;top:268px;color:#000;letter-spacing:-0.26px">03 My Saving Grace (WonderCAST).mkv</div>
<div class="t" style="left:408px;top:268px">172.6 MB</div>
<div class="t" style="left:561px;top:268px">Done</div>
<div class="t" style="left:870px;top:268px">11248.3KB/s</div>
<svg class="a" style="left:21px;top:282px" width="18" height="17"><rect x="5.5" y="1.5" width="11" height="14" fill="#ececf2" stroke="#3a3a52" stroke-width="1"/><rect x="7" y="9" width="4" height="4.5" fill="#88b890"/><rect x="11.5" y="10" width="3.5" height="3.5" fill="#d8c0cc"/><rect x="1.2" y="1.8" width="13.6" height="7.2" rx="1.5" fill="#1e7a1e" stroke="#0c400c" stroke-width="0.9"/><text x="8" y="7.9" font-family="Liberation Mono" font-weight="bold" font-size="7.6" fill="#f4fff0" text-anchor="middle" letter-spacing="-0.3">AVI</text></svg>
<div class="t" style="left:41px;top:285px;color:#000;letter-spacing:0.25px">three.avi</div>
<div class="t" style="left:408px;top:285px">732.3 MB</div>
<div class="t" style="left:561px;top:285px">Done</div>
<div class="t" style="left:870px;top:285px">5669.5KB/s</div>
<div class="a" style="left:2px;top:299px;width:1020px;height:17px;background:#f3f3f6"></div>
<svg class="a" style="left:21px;top:299px" width="18" height="17"><rect x="5.5" y="1.5" width="11" height="14" fill="#ececf2" stroke="#3a3a52" stroke-width="1"/><rect x="7" y="9" width="4" height="4.5" fill="#88b890"/><rect x="11.5" y="10" width="3.5" height="3.5" fill="#d8c0cc"/><rect x="1.2" y="1.8" width="13.6" height="7.2" rx="1.5" fill="#1e7a1e" stroke="#0c400c" stroke-width="0.9"/><text x="8" y="7.9" font-family="Liberation Mono" font-weight="bold" font-size="7.6" fill="#f4fff0" text-anchor="middle" letter-spacing="-0.3">AVI</text></svg>
<div class="t" style="left:41px;top:302px;color:#000;letter-spacing:0.33px">two.avi</div>
<div class="t" style="left:408px;top:302px">430.1 MB</div>
<div class="t" style="left:561px;top:302px">Done</div>
<div class="t" style="left:870px;top:302px">7998.3KB/s</div>
<svg class="a" style="left:21px;top:316px" width="18" height="17"><rect x="5.5" y="1.5" width="11" height="14" fill="#ececf2" stroke="#3a3a52" stroke-width="1"/><rect x="7" y="9" width="4" height="4.5" fill="#88b890"/><rect x="11.5" y="10" width="3.5" height="3.5" fill="#d8c0cc"/><rect x="1.2" y="1.8" width="13.6" height="7.2" rx="1.5" fill="#1e7a1e" stroke="#0c400c" stroke-width="0.9"/><text x="8" y="7.9" font-family="Liberation Mono" font-weight="bold" font-size="7.6" fill="#f4fff0" text-anchor="middle" letter-spacing="-0.3">AVI</text></svg>
<div class="t" style="left:41px;top:319px;color:#000;letter-spacing:0.17px">one.avi</div>
<div class="t" style="left:408px;top:319px">437.0 MB</div>
<div class="t" style="left:561px;top:319px">Done</div>
<div class="t" style="left:870px;top:319px">1102.3KB/s</div>
<div class="a" style="left:2px;top:333px;width:1020px;height:17px;background:#f3f3f6"></div>
<svg class="a" style="left:21px;top:333px" width="18" height="17"><rect x="5.5" y="1.5" width="11" height="14" fill="#ececf2" stroke="#3a3a52" stroke-width="1"/><rect x="7" y="9" width="4" height="4.5" fill="#88b890"/><rect x="11.5" y="10" width="3.5" height="3.5" fill="#d8c0cc"/><rect x="1.2" y="1.8" width="13.6" height="7.2" rx="1.5" fill="#1e7a1e" stroke="#0c400c" stroke-width="0.9"/><text x="8" y="7.9" font-family="Liberation Mono" font-weight="bold" font-size="7.6" fill="#f4fff0" text-anchor="middle" letter-spacing="-0.3">AVI</text></svg>
<div class="t" style="left:41px;top:336px;color:#000;letter-spacing:-0.08px">Comedy_175.avi</div>
<div class="t" style="left:408px;top:336px">601.0 MB</div>
<div class="t" style="left:561px;top:336px">Done</div>
<div class="t" style="left:870px;top:336px">746.9KB/s</div>
<div class="a" style="left:8px;top:218px;width:8px;height:8px;border-radius:50%;background:radial-gradient(circle at 35% 35%,#b8f0a0,#3cb83c 55%,#1e7a1e)"></div>
<div class="a" style="left:563px;top:215px;width:150px;height:15px;border:1px solid #5a7a98;background:linear-gradient(90deg,#d4ecf8 0,#c4e2f4 36px,#4e8cba 36px,#4e8cba 100%)"></div>
<div class="a" style="left:600px;top:216px;width:112px;height:13px;background:linear-gradient(#80b0d0,#5890bc 40%,#4c88b6)"></div>
<div class="t" style="left:626px;top:217px;color:#d8ecf8">26%</div>
<svg class="a" style="left:480px;top:410px" width="50" height="50"><defs><filter id="bl" x="-50%" y="-50%" width="200%" height="200%"><feGaussianBlur stdDeviation="2.2"/></filter></defs>
<path d="M22 30 L36 30 L36 38 L26 44 L20 40 Z" fill="#000" opacity="0.45" filter="url(#bl)"/>
<path d="M12.5 11.5 L33.5 27.5 L33 30 L24 31.5 L16 38 L15 37.5 Z" fill="#6e6e6e" stroke="#4a4a4a" stroke-width="0.8"/>
<path d="M16.5 19 L30 28.3 L23.5 29.8 L19 35 Z" fill="#262626"/>
<path d="M24 31.5 L33 29.5 L32 33 L22 35.5 Z" fill="#a8a8a8"/>
</svg><div class="a" style="left:2px;top:663px;width:1020px;height:1px;background:#b4c2d8"></div><div id="details" class="a"></div>
<div class="t" style="left:5px;top:670px;color:#fff">From</div>
<div class="t" style="left:5px;top:690px;color:#fff">To</div>
<div class="t" style="left:5px;top:710px;color:#fff">Size</div>
<div class="t" style="left:5px;top:730px;color:#fff;letter-spacing:0.1px">Transferred</div>

<div id="status" class="a"></div>
</body></html>
